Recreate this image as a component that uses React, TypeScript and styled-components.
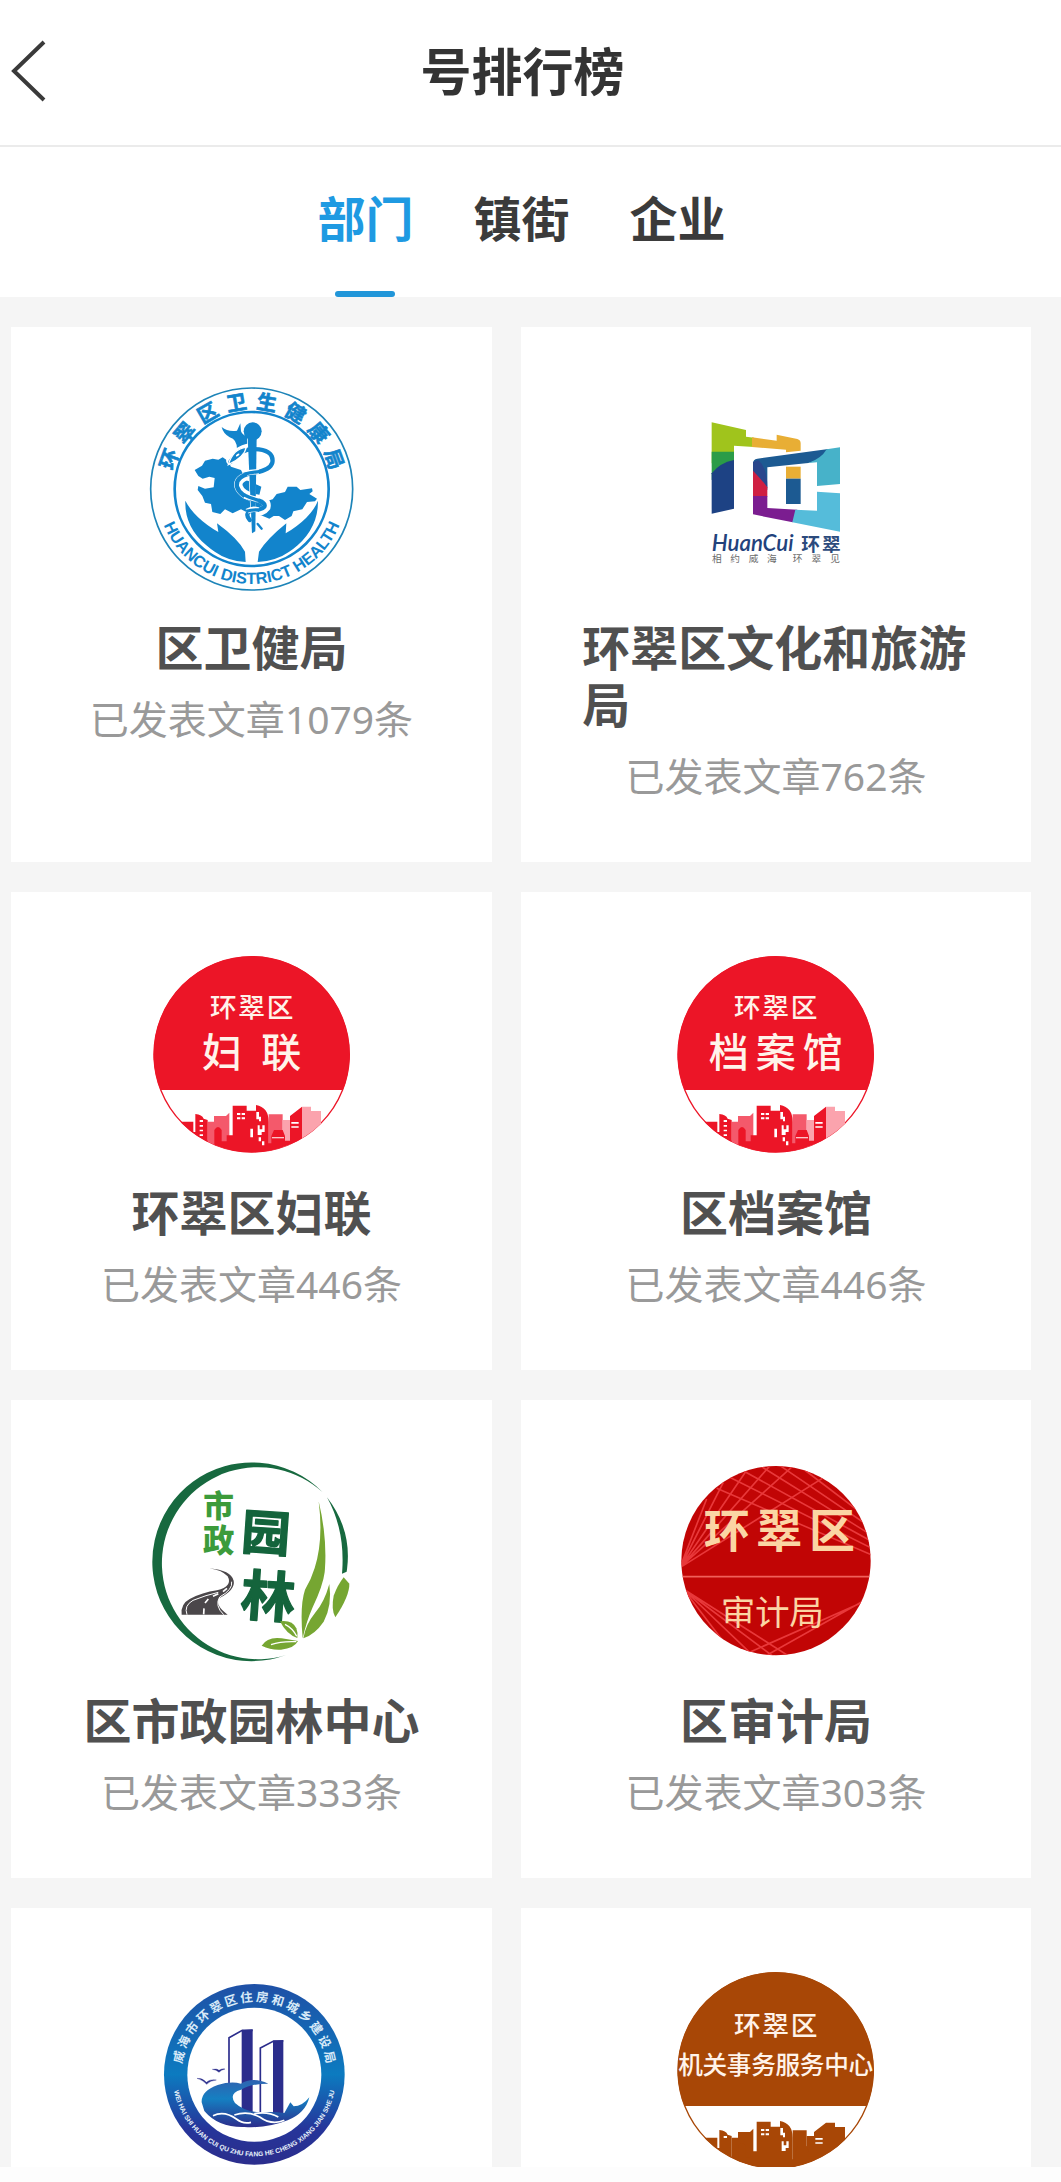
import React, { useState } from "react";
import styled, { createGlobalStyle } from "styled-components";

const cjk = '"Noto Sans CJK SC"';

const GlobalStyle = createGlobalStyle`
  * { box-sizing: border-box; }
  body {
    margin: 0;
    background: #fdfdfd;
    font-family: "Noto Sans", ${cjk}, sans-serif;
  }
`;

const Shell = styled.div`
  display: flex;
  flex-direction: column;
  height: 100vh;
  padding-bottom: 15px;
`;

const Header = styled.header`
  display: grid;
  grid-template-columns: 64px 1fr 80px;
  align-items: center;
  height: 147px;
  padding-bottom: 3px;
  flex: none;
  background: #fff;
  border-bottom: 2px solid #ebebeb;
`;

const BackButton = styled.button`
  display: flex;
  padding: 0 0 0 10px;
  border: 0;
  background: none;
  cursor: pointer;
`;

const PageTitle = styled.h1`
  margin: 0;
  font-size: 51px;
  line-height: 72px;
  font-weight: 700;
  text-align: center;
  color: #333;
`;

const Tabs = styled.div`
  display: flex;
  justify-content: center;
  gap: 60px;
  height: 150px;
  flex: none;
  padding-right: 18px;
  background: #fff;
`;

const Tab = styled.button<{ $active: boolean }>`
  display: flex;
  flex-direction: column;
  align-items: center;
  justify-content: space-between;
  padding: 36px 0 0;
  border: 0;
  background: none;
  font: inherit;
  font-size: 48px;
  line-height: 72px;
  font-weight: 700;
  color: ${(p) => (p.$active ? "#1f9ae2" : "#3b3b3b")};
  cursor: pointer;

  &::after {
    content: "";
    width: 60px;
    height: 6px;
    border-radius: 3px;
    background: ${(p) => (p.$active ? "#2196d9" : "transparent")};
  }
`;

const Main = styled.main`
  flex: 1;
  min-height: 0;
  overflow-y: auto;
  scrollbar-width: none;
  background: #f5f5f5;
`;

const CardGrid = styled.ul`
  display: grid;
  grid-template-columns: 481fr 510fr;
  gap: 30px 29px;
  margin: 0;
  padding: 30px 30px 30px 11px;
  list-style: none;
`;

const CardItem = styled.li`
  display: flex;
`;

const Card = styled.a`
  display: flex;
  flex-direction: column;
  align-items: center;
  flex: 1;
  padding: 60px 0 63px;
  background: #fff;
  text-decoration: none;
`;

const Emblem = styled.svg`
  display: block;
  width: 204px;
  height: 204px;
  overflow: visible;
  font-family: "Liberation Sans", ${cjk}, sans-serif;
`;

const Name = styled.h2`
  max-width: 76%;
  margin: 28px 0 20px;
  font-size: 48px;
  line-height: 57px;
  font-weight: 700;
  color: #505050;
`;

const Count = styled.p`
  margin: 0;
  font-size: 39px;
  line-height: 46px;
  color: #999;
`;

type SpacedProps = {
  text: string;
  cx: number;
  cy: number;
  size: number;
  pitch: number;
  fill: string;
  weight?: number;
};

/* One line of characters set on an even pitch around a centre point. */
function Spaced({ text, cx, cy, size, pitch, fill, weight = 400 }: SpacedProps) {
  const xs = [...text].map((_, i) => cx + (i - (text.length - 1) / 2) * pitch - size / 2);
  return (
    <text x={xs.join(" ")} y={cy + size * 0.38} fontSize={size} fontWeight={weight} fill={fill}>
      {text}
    </text>
  );
}

type ArcProps = {
  text: string;
  cx: number;
  cy: number;
  r: number;
  spread: number;
  size: number;
  fill: string;
  weight?: number;
};

/* Characters standing on the upper rim of a seal, from -spread to +spread degrees. */
function Arc({ text, cx, cy, r, spread, size, fill, weight = 700 }: ArcProps) {
  const xs: number[] = [];
  const ys: number[] = [];
  const turns: number[] = [];
  [...text].forEach((_, i) => {
    const deg = -spread + (2 * spread * i) / (text.length - 1);
    const a = (deg * Math.PI) / 180;
    const dx = -size / 2;
    const dy = size * 0.38;
    xs.push(cx + r * Math.sin(a) + dx * Math.cos(a) - dy * Math.sin(a));
    ys.push(cy - r * Math.cos(a) + dx * Math.sin(a) + dy * Math.cos(a));
    turns.push(deg);
  });
  return (
    <text x={xs.join(" ")} y={ys.join(" ")} rotate={turns.join(" ")} fontSize={size} fontWeight={weight} fill={fill}>
      {text}
    </text>
  );
}

function HealthEmblem() {
  const blue = "#1284cc";
  return (
    <Emblem viewBox="57 51 612 612" aria-hidden="true">
      <circle cx="362" cy="357" r="303" fill="#fff" stroke="#1d84b8" strokeWidth="5" />
      <circle cx="362" cy="357" r="231" fill="none" stroke={blue} strokeWidth="8" />
      <g stroke={blue} strokeWidth="2">
        <Arc text="环翠区卫生健康局" cx={362} cy={357} r={264} spread={70} size={60} fill={blue} />
      </g>
      <path id="health-rim" d="M77 357 A285 285 0 0 0 647 357" fill="none" />
      <text fontSize="49" fontWeight="700" fill={blue} textAnchor="middle">
        <textPath href="#health-rim" startOffset="50%">HUANCUI DISTRICT HEALTH</textPath>
      </text>
      <g fill={blue}>
        <path d="M191 300 L213 287 L222 272 L245 266 L262 269 L275 262 L290 272 L300 290 L330 300 L345 330 L380 345 L391 350 L385 375 L410 392 L425 388 L437 372 L462 366 L470 350 L497 350 L508 360 L543 355 L545 364 L535 372 L558 386 L552 394 L528 396 L514 418 L487 424 L482 438 L462 450 L444 438 L428 438 L415 446 L390 436 L350 428 L330 418 L305 430 L282 418 L268 432 L244 426 L240 402 L222 398 L214 378 L200 360 L202 348 L222 356 L248 352 L251 324 L235 320 L215 326 L202 318 Z" />
        <path d="M272 171 Q290 186 318 182 L328 160 L330 184 Q334 196 350 200 L350 234 L318 238 Q318 208 296 202 Q276 190 272 171 Z" />
        <path d="M163 392 Q190 444 262 486 L258 460 Q320 505 342 545 L344 576 Q280 574 226 526 Q160 470 163 392 Z" />
        <path d="M561 392 Q540 444 464 490 L466 460 Q410 505 384 545 L380 576 Q446 574 500 526 Q562 470 561 392 Z" />
      </g>
      <g fill="none" strokeLinecap="round">
        <path d="M298 272 Q326 226 384 232 Q436 240 430 280 Q422 306 372 314 Q318 320 322 348 Q330 374 372 384 Q412 390 406 412 Q394 428 366 426 Q342 432 360 452" stroke="#fff" strokeWidth="25" />
        <path d="M350 204 L374 204 L371 484 L363 490 Z" fill={blue} stroke="#fff" strokeWidth="4" />
        <path d="M298 276 Q326 232 384 238 Q430 244 424 278 Q418 300 372 308 Q312 316 318 350 Q326 378 372 390 Q406 396 400 410 Q390 420 366 420 Q338 428 356 450" stroke={blue} strokeWidth="13" />
        <path d="M292 284 Q306 236 346 232 Q340 262 292 284 Z" fill={blue} stroke="#fff" strokeWidth="4" />
        <path d="M380 462 L392 476" stroke={blue} strokeWidth="7" />
      </g>
      <path d="M350 200 L377 200 L373 484 L363 490 Z" fill={blue} />
      <path d="M346 310 Q362 304 384 306 M340 378 Q362 384 384 390 M348 424 Q364 414 382 420" fill="none" stroke="#fff" strokeWidth="16" />
      <path d="M338 313 Q362 307 388 304 M338 374 Q362 386 388 392 M346 424 Q364 418 384 420" fill="none" stroke={blue} strokeWidth="10" />
      <circle cx="365" cy="184" r="27" fill={blue} />
      <ellipse cx="320" cy="255" rx="6" ry="3" fill="#fff" transform="rotate(-35 320 255)" />
    </Emblem>
  );
}

function TourismEmblem() {
  return (
    <Emblem viewBox="-18 -39 612 612" aria-hidden="true">
      <path d="M95 67 L198 90 V110 L222 113 V141 L162 137 V180 L95 190 Z" fill="#a0c41c" />
      <path d="M216 112 L290 122 V104 L352 117 Q362 120 362 130 V152 L318 157 V149 L216 141 Z" fill="#e8ae35" />
      <path d="M95 155 H162 V200 L95 240 Z" fill="#2b9c48" />
      <path d="M95 220 Q120 188 162 180 V326 L95 341 Z" fill="#1d4284" />
      <path d="M219 190 Q219 178 232 176 L445 147 Q430 180 385 189 L262 202 V270 L219 215 Z" fill="#1c5a92" />
      <path d="M219 186 L235 180 Q262 205 262 262 L219 214 Z" fill="#29468c" />
      <path d="M219 212 Q246 240 262 262 V290 H219 Z" fill="#cf1f42" />
      <path d="M219 288 H262 V324 L352 329 L338 367 L219 343 Z" fill="#7b1d90" />
      <path d="M440 148 L480 142 V252 L411 258 V187 L385 189 Q424 176 440 148 Z" fill="#47b2c9" />
      <path d="M346 329 L411 332 V275 L480 280 V395 L337 367 Z" fill="#55bcda" />
      <path d="M318 200 H362 V236 H318 Z" fill="#e8ae35" />
      <path d="M318 236 H362 V312 H318 Z" fill="#1c5a92" />
      <text x="95" y="453" fontSize="67" fontFamily="Lato, sans-serif" fontStyle="italic" fontWeight="600" fill="#22427c">HuanCui</text>
      <Spaced text="环翠" cx={423} cy={432} size={56} pitch={62} fill="#2b4a7c" weight={700} />
      <Spaced text="相约威海" cx={193} cy={475} size={29} pitch={55} fill="#6b6b6b" />
      <Spaced text="环翠见" cx={409} cy={475} size={29} pitch={56} fill="#6b6b6b" />
    </Emblem>
  );
}

type CityProps = {
  id: string;
  color: string;
  mid: string;
  pale: string;
  region: number;
  line: string;
  lineY: number;
  size: number;
  pitch: number;
};

/* Round badge with a two-line caption above a city skyline. */
function CityEmblem({ id, color, mid, pale, region, line, lineY, size, pitch }: CityProps) {
  return (
    <Emblem viewBox="42 36 612 612" aria-hidden="true">
      <clipPath id={id}><circle cx="347" cy="343" r="294" /></clipPath>
      <circle cx="347" cy="343" r="293" fill="#fff" stroke={color} strokeWidth="4" />
      <g clipPath={`url(#${id})`}>
        <path d="M42 36 H654 V450 H42 Z" fill={color} />
        <path d="M215 545 H234 V528 H270 L280 518 V640 H215 Z M398 523 H440 V640 H398 Z" fill={mid} />
        <path d="M440 540 H465 V640 H440 Z M498 500 H525 V513 H555 V640 H498 Z" fill={pale} />
        <path d="M130 545 H172 V576 H178 V522 Q198 524 203 536 L215 540 V620 H235 V570 Q246 552 257 570 V604 H272 V586 H290 V497 H332 V512 H360 V495 Q398 502 398 545 V610 H406 V588 L414 570 H440 L447 588 V602 H462 V528 L498 500 V640 H130 Z" fill={color} />
        <path d="M303 519 h10 v6 h-10z M317 519 h10 v6 h-10z M303 532 h10 v6 h-10z M317 532 h10 v6 h-10z M191 540 h10 v6 h-10z M361 516 h8 v14 h6 v14 h-6 v-6 h-8z M365 556 h6 v12 h8 v-12 h7 v20 h-9 v9 h-12z M466 546 h22 v5 h-22z M466 559 h22 v4 h-22z" fill="#fff" />
        {color !== mid && (
          <path d="M191 555 h10 v5 h-10z M191 569 h10 v5 h-10z M191 583 h10 v5 h-10z M368 592 h7 v12 h-7z M378 604 h7 v12 h-7z M343 566 h8 v26 h-8z M408 592 h36 v3 h-36z" fill="#fff" />
        )}
      </g>
      <Spaced text="环翠区" cx={347} cy={region} size={80} pitch={85} fill="#fff3ea" weight={500} />
      <Spaced text={line} cx={347} cy={lineY} size={size} pitch={pitch} fill="#fff3ea" weight={500} />
    </Emblem>
  );
}

function GardenEmblem() {
  return (
    <Emblem viewBox="57 63 612 612" aria-hidden="true">
      <path d="M575 160 A298 298 0 1 0 465 648 A288 288 0 1 1 575 160 Z" fill="#17693f" />
      <path d="M588 175 Q666 276 647 398 L633 404 Q644 276 588 175 Z" fill="#17693f" />
      <Spaced text="市" cx={263} cy={200} size={92} pitch={0} fill="#3c9b3b" weight={900} />
      <Spaced text="政" cx={263} cy={302} size={94} pitch={0} fill="#3c9b3b" weight={900} />
      <g stroke="#14643c" strokeWidth="4" strokeLinejoin="round">
        <g transform="rotate(4 405 280)">
          <Spaced text="园" cx={405} cy={280} size={146} pitch={0} fill="#14643c" weight={700} />
        </g>
        <g transform="rotate(4 412 470)">
          <Spaced text="林" cx={412} cy={470} size={164} pitch={0} fill="#14643c" weight={700} />
        </g>
      </g>
      <path d="M235 388 Q300 394 308 425 Q314 452 264 478 Q252 500 290 527 H152 Q148 495 176 480 Q214 460 258 454 Q306 442 290 412 Q272 393 235 388 Z" fill="#4b474a" />
      <path d="M168 527 Q158 500 186 484 Q226 468 262 460 M278 527 Q250 500 266 474 Q306 452 302 428" fill="none" stroke="#fff" strokeWidth="3" />
      <path d="M218 526 L219 508 M222 492 L232 480 M246 472 L262 464 M276 458 L288 448" fill="none" stroke="#fff" strokeWidth="5" />
      <g fill="#76a632">
        <path d="M563 187 Q590 300 581 400 Q576 440 545 505 Q526 548 515 598 Q506 500 522 452 Q584 350 563 187 Z" />
        <path d="M595 435 Q604 500 578 548 Q552 586 517 598 Q524 556 552 522 Q580 490 595 435 Z" />
        <path d="M638 415 L655 434 Q656 470 613 535 Q600 512 608 470 Q620 438 638 415 Z" />
        <path d="M447 547 Q484 542 496 568 Q502 584 499 597 Q466 586 447 547 Z" />
        <path d="M392 620 Q410 592 452 598 L501 606 Q490 628 450 632 Q420 634 392 620 Z" />
      </g>
      <path d="M420 617 Q450 606 496 608 M462 556 Q486 568 497 592" fill="none" stroke="#fff" strokeWidth="4" />
    </Emblem>
  );
}

function AuditEmblem() {
  return (
    <Emblem viewBox="42 33 612 612" aria-hidden="true">
      <clipPath id="audit-disc"><circle cx="348" cy="335" r="284" /></clipPath>
      <circle cx="348" cy="335" r="284" fill="#c10505" />
      <g clipPath="url(#audit-disc)" fill="none" stroke="#e8383a" strokeWidth="5">
        <path d="M66 340 L140 150 M66 345 L190 100 M66 348 L256 70 M66 350 L330 50 M66 350 L400 50 M66 352 L500 80" />
        <path d="M170 118 L640 320 M200 80 L640 300 M240 60 L640 280 M300 50 L640 262 M360 50 L640 240 M430 60 L640 220" />
        <path d="M70 420 L400 630 M70 420 L350 630 M70 420 L290 630 M70 420 L230 630 M250 618 L630 450 M300 630 L630 445" />
        <path d="M60 383 H640" stroke="#f0605a" />
      </g>
      <Spaced text="环翠区" cx={358} cy={243} size={138} pitch={158} fill="#fbd5a4" weight={700} />
      <Spaced text="审计局" cx={337} cy={487} size={104} pitch={103} fill="#fbd5a4" />
    </Emblem>
  );
}

function HousingEmblem() {
  const indigo = "#2b2d8c";
  return (
    <Emblem viewBox="27 27 612 612" aria-hidden="true">
      <linearGradient id="rim" x1="0" y1="0" x2="0" y2="1">
        <stop offset="0" stopColor="#1f50a6" />
        <stop offset="0.5" stopColor="#0c7bc0" />
        <stop offset="0.8" stopColor="#26359a" />
        <stop offset="1" stopColor="#2b2d8c" />
      </linearGradient>
      <linearGradient id="wave" x1="0" y1="0" x2="0" y2="1">
        <stop offset="0" stopColor="#2f63b0" />
        <stop offset="0.4" stopColor="#1580c2" />
        <stop offset="1" stopColor="#2b2d8c" />
      </linearGradient>
      <circle cx="340" cy="346" r="271" fill="url(#rim)" />
      <circle cx="340" cy="347" r="201" fill="#fff" />
      <Arc text="威海市环翠区住房和城乡建设局" cx={340} cy={346} r={233} spread={77} size={37} fill="#d8eaf8" weight={700} />
      <path id="housing-rim" d="M94 346 A246 246 0 0 0 586 346" fill="none" />
      <text fontSize="20" fontWeight="700" fill="#e8f2fb" textAnchor="middle">
        <textPath href="#housing-rim" startOffset="50%">WEI HAI SHI HUAN CUI QU ZHU FANG HE CHENG XIANG JIAN SHE JU</textPath>
      </text>
      <path d="M302 214 L335 211 V460 H302 Z M396 245 L427 243 V462 H396 Z" fill={indigo} />
      <path d="M264 385 V236 L304 214 H335 M358 465 V267 L398 246 H427" fill="none" stroke={indigo} strokeWidth="5" />
      <path d="M182 430 Q180 396 230 378 Q270 366 300 374 Q334 352 382 374 Q330 374 300 392 Q262 402 282 432 Q310 458 356 460 Q400 458 430 462 L448 430 L458 442 Q484 442 505 415 Q494 462 440 484 Q380 508 310 504 Q232 506 190 456 Z" fill="url(#wave)" />
      <path d="M216 470 Q250 454 286 480 Q306 496 330 490 M280 468 Q320 454 356 474 Q392 500 430 484 M340 464 Q380 456 412 474" fill="none" stroke="#fff" strokeWidth="5" />
      <path d="M168 358 Q184 356 196 370 Q206 360 226 363 Q208 364 197 376 Q184 362 168 358 Z M214 331 Q228 328 234 334 Q242 328 252 330 Q240 333 234 340 Q226 332 214 331 Z" fill={indigo} stroke={indigo} strokeWidth="1" />
    </Emblem>
  );
}

const red = { color: "#ec1527", mid: "#f4596b", pale: "#fba3ad" };
const brown = { color: "#a84706", mid: "#a84706", pale: "#a84706" };

type Account = {
  id: string;
  name?: string;
  count?: number;
  emblem: React.ReactNode;
};

const accounts: Account[] = [
  { id: "health", name: "区卫健局", count: 1079, emblem: <HealthEmblem /> },
  { id: "tourism", name: "环翠区文化和旅游局", count: 762, emblem: <TourismEmblem /> },
  { id: "women", name: "环翠区妇联", count: 446, emblem: <CityEmblem id="women" {...red} region={202} line="妇联" lineY={335} size={120} pitch={178} /> },
  { id: "archive", name: "区档案馆", count: 446, emblem: <CityEmblem id="archive" {...red} region={202} line="档案馆" lineY={335} size={120} pitch={141} /> },
  { id: "garden", name: "区市政园林中心", count: 333, emblem: <GardenEmblem /> },
  { id: "audit", name: "区审计局", count: 303, emblem: <AuditEmblem /> },
  { id: "housing", emblem: <HousingEmblem /> },
  { id: "affairs", emblem: <CityEmblem id="affairs" {...brown} region={206} line="机关事务服务中心" lineY={325} size={74} pitch={73} /> },
];

const tabs = ["部门", "镇街", "企业"];

export default function App() {
  const [active, setActive] = useState(tabs[0]);
  return (
    <>
      <GlobalStyle />
      <Shell>
        <Header>
          <BackButton type="button" aria-label="返回">
            <svg width="38" height="64" viewBox="0 0 38 64" fill="none" stroke="#3a3a3a" strokeWidth="4">
              <path d="M34 3 L4 32 L34 61" />
            </svg>
          </BackButton>
          <PageTitle>号排行榜</PageTitle>
        </Header>
        <Tabs role="tablist">
          {tabs.map((t) => (
            <Tab key={t} type="button" role="tab" aria-selected={t === active} $active={t === active} onClick={() => setActive(t)}>
              {t}
            </Tab>
          ))}
        </Tabs>
        <Main>
          <CardGrid>
            {accounts.map((a) => (
              <CardItem key={a.id}>
                <Card href={`#${a.id}`}>
                  {a.emblem}
                  {a.name && <Name>{a.name}</Name>}
                  {a.count !== undefined && <Count>已发表文章{a.count}条</Count>}
                </Card>
              </CardItem>
            ))}
          </CardGrid>
        </Main>
      </Shell>
    </>
  );
}
